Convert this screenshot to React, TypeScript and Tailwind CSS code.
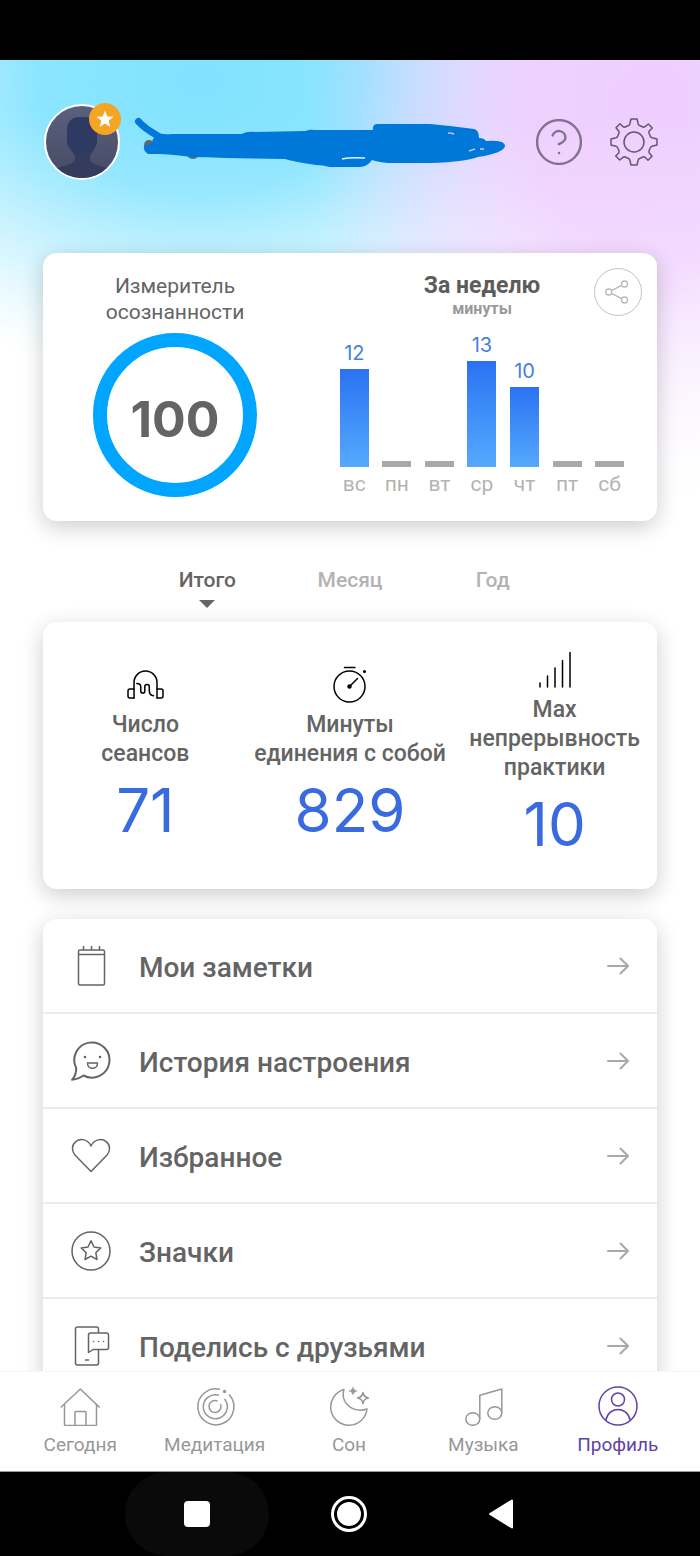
import type { ReactNode } from "react";
import { HelpCircle } from "lucide-react";

const week = [
  { day: "вс", minutes: 12 },
  { day: "пн", minutes: 0 },
  { day: "вт", minutes: 0 },
  { day: "ср", minutes: 13 },
  { day: "чт", minutes: 10 },
  { day: "пт", minutes: 0 },
  { day: "сб", minutes: 0 },
];

const periods = ["Итого", "Месяц", "Год"];

const stats = [
  {
    lines: ["Число", "сеансов"],
    value: 71,
    icon: (
      <>
        <path d="M7 31V15.500a11.500 11.500 0 0 1 23 0V31" />
        <path d="M7 31H3a2 2 0 0 1-2-2v-5a2 2 0 0 1 2-2h4M30 31h4a2 2 0 0 0 2-2v-5a2 2 0 0 0-2-2h-4" />
        <path d="M9.800 16.500c3 0 4 1.500 4 3.500v4c0 2.800 4 2.800 4 0v-4.500c0-2.800 4.500-2.800 4.500 0v4c0 3.500 1.200 5 4.200 5.200" />
      </>
    ),
  },
  {
    lines: ["Минуты", "единения с собой"],
    value: 829,
    icon: (
      <>
        <circle cx="17.500" cy="19.500" r="15.500" />
        <path d="M12.500 .5h10.500M17.500 19.500l8-8" />
        <circle cx="17.500" cy="19.500" r="1.500" fill="currentColor" />
        <circle cx="32.500" cy="4.500" r=".8" fill="currentColor" />
      </>
    ),
  },
  {
    lines: ["Max", "непрерывность", "практики"],
    value: 10,
    icon: <path d="M3 35v-4M10.500 35V24M18 35V16M25.500 35V8.500M33 35V.5" />,
  },
];

const menuItems = [
  {
    label: "Мои заметки",
    icon: (
      <>
        <rect x="7.500" y="4" width="26" height="35" rx="1.500" />
        <path d="M7.500 8.500h26M12.500 0v4M20.500 0v4M28.500 0v4" />
      </>
    ),
  },
  {
    label: "История настроения",
    icon: (
      <>
        <path
          strokeWidth="2"
          d="M5.200 27A17.600 17.600 0 1 1 12.500 34.500C8.500 37 4.500 38.700 1 38.800C3.500 36 5.500 33 5.200 27Z"
        />
        <path d="M16.500 22h10c0 7-10 7-10 0Z" />
        <circle cx="14" cy="16" r="1.300" fill="currentColor" stroke="none" />
        <circle cx="29" cy="16" r="1.300" fill="currentColor" stroke="none" />
      </>
    ),
  },
  {
    label: "Избранное",
    icon: (
      <path d="M20 35.500 4.200 19.300C.4 15 .6 9 4.500 5.800C9.500 1.800 17 3.300 20 10C23 3.300 30.500 1.800 35.500 5.800C39.400 9 39.600 15 35.800 19.300Z" />
    ),
  },
  {
    label: "Значки",
    icon: (
      <>
        <circle cx="20" cy="20" r="19" />
        <path d="m20 9.800 3 6.200 6.800.9-5 4.800 1.200 6.800-6-3.300-6 3.300 1.200-6.800-5-4.800 6.800-.9Z" />
      </>
    ),
  },
  {
    label: "Поделись с друзьями",
    icon: (
      <>
        <path d="M27.500 7V3a2 2 0 0 0-2-2h-19a2 2 0 0 0-2 2v34a2 2 0 0 0 2 2h19a2 2 0 0 0 2-2V23.500M14 34h4" />
        <path d="M19.500 7h16a2 2 0 0 1 2 2v12.500a2 2 0 0 1-2 2H22l-4.500 3V9a2 2 0 0 1 2-2Z" />
        <path strokeLinecap="round" d="M22.500 15.500h.1M27.500 15.500h.1M32.500 15.500h.1" />
      </>
    ),
  },
];

const tabs = [
  {
    label: "Сегодня",
    icon: (
      <>
        <path d="M.7 21.500 20.300 3l19.300 18.500" />
        <path d="M4.500 18.500v20a1 1 0 0 0 1 1h30a1 1 0 0 0 1-1v-20" />
        <path d="M15 39.500v-13a1 1 0 0 1 1-1h9a1 1 0 0 1 1 1v13" />
      </>
    ),
  },
  {
    label: "Медитация",
    icon: (
      <>
        <path d="M25 3.300A18 18 0 1 0 34 8.500" />
        <path d="M24 9.300A12 12 0 1 0 29.500 13" />
        <path d="M22.500 15A6 6 0 1 0 25.500 18" />
        <circle cx="29.500" cy="5.500" r="1" fill="currentColor" />
      </>
    ),
  },
  {
    label: "Сон",
    icon: (
      <>
        <path d="M15 3.500A18.200 18.200 0 1 0 38 23C24 27.500 11 17 15 3.500Z" />
        <path
          fill="currentColor"
          strokeWidth=".5"
          d="M24 1q.6 3.400 4 4-3.400.6-4 4-.6-3.400-4-4 3.400-.6 4-4Z"
        />
        <path d="M34 6.500q.8 4.700 5.500 5.500-4.700.8-5.500 5.500-.8-4.700-5.500-5.500 4.700-.8 5.500-5.500Z" />
      </>
    ),
  },
  {
    label: "Музыка",
    icon: (
      <>
        <ellipse cx="9.800" cy="33" rx="7" ry="6.300" />
        <ellipse cx="31.800" cy="27" rx="7" ry="6.300" />
        <path d="M16.800 33V9.200L38.800 3v24" />
      </>
    ),
  },
  {
    label: "Профиль",
    icon: (
      <>
        <circle cx="20" cy="20" r="19" />
        <circle cx="20" cy="13.500" r="6.500" />
        <path d="M7.800 34.500C9 27.500 14 23.500 20 23.500S31 27.500 32.200 34.500" />
      </>
    ),
  },
];

function Icon({ children, className }: { children: ReactNode; className: string }) {
  return (
    <svg
      aria-hidden="true"
      viewBox="0 0 40 40"
      className={className}
      fill="none"
      stroke="currentColor"
      strokeWidth="1.5"
      strokeLinejoin="round"
    >
      {children}
    </svg>
  );
}

function Avatar() {
  return (
    <div className="relative size-[76px] shrink-0">
      <svg
        viewBox="0 0 72 72"
        className="size-full rounded-full border-2 border-white bg-linear-to-b from-[#5b607e] to-[#464a63]"
      >
        <path
          fill="#333c5c"
          d="M6 66C14 58 27 61 29 53C30 47 22 44 21 36V25C21 15 26 11 36 11S51 15 51 25V36C50 44 43 47 44 53C46 61 58 58 66 66V72H6Z"
        />
        <path fill="#2f3a63" d="M21 25C21 15 26 11 36 11S51 15 51 25V36C49 42 46 47 36 47S23 42 21 36Z" />
      </svg>
      <span className="absolute -top-px -right-px grid size-8 place-items-center rounded-full bg-[#f5a426]">
        <svg viewBox="0 0 18 18" className="size-[18px]" fill="#fff">
          <path d="m9 .5 2.300 5.900 6.300.4-4.900 4 1.600 6.200L9 13.500 3.700 17l1.600-6.200-4.900-4 6.300-.4Z" />
        </svg>
      </span>
    </div>
  );
}

function Scribble() {
  return (
    <svg aria-hidden="true" viewBox="132 112 376 60" className="ml-3 h-[60px] w-[376px]">
      <circle cx="149" cy="145" r="5" fill="#5c6a70" />
      <ellipse cx="193" cy="156" rx="5" ry="3" fill="#5c6a70" />
      <path
        d="M138.500 121.500Q144 128 158 136"
        stroke="#0078d9"
        strokeWidth="7"
        strokeLinecap="round"
        fill="none"
      />
      <path
        fill="#0078d9"
        d="M156 132Q162 135 172 134L242 134Q247 131 255 132L306 131Q309 129 315 130L373 130Q372 124 378 124L430 124Q440 125 450 126L474 129Q479 130 479 138Q484 138 486 141Q505 140 505 146Q504 153 478 157Q460 163 420 163L388 163Q378 162 372 160Q367 167 360 167L330 167Q322 165 316 165Q295 162 285 159L225 158Q208 157 190 157Q178 155 160 154L148 154Q143 151 144 146Q148 146 152 143Q152 139 156 136Z"
      />
      <path
        d="M342 159Q350 157 365 158"
        stroke="#e3f4ff"
        strokeWidth="1.5"
        fill="none"
      />
      <path d="M448 133q4 0 6 1M469 151l6-2M480 149h4" stroke="#b9c6e8" strokeWidth="1.5" />
    </svg>
  );
}

function Header() {
  return (
    <header className="flex items-center pt-11 pr-[42px] pb-[73px] pl-11">
      <Avatar />
      <Scribble />
      <div className="ml-auto flex shrink-0 items-center gap-7">
        <button aria-label="Помощь" className="text-[#81728d]">
          <HelpCircle viewBox="1.5 1.5 21 21" className="size-[46px]" strokeWidth={1.1} />
        </button>
        <button aria-label="Настройки" className="text-[#62596b]">
          <svg
            viewBox="-24 -24 48 48"
            className="size-12"
            fill="none"
            stroke="currentColor"
            strokeWidth="1.5"
            strokeLinejoin="round"
          >
            <circle r="10" />
            <path d="M-3-23H3L4.200-18Q4.700-16.600 6-16.200L9-15Q10-14.600 11-15.300L14.300-18 18.300-14 15.300-11Q14.600-10 15-9L16.200-6Q16.600-4.700 18-4.200L23-3V3L18 4.200Q16.600 4.700 16.200 6L15 9Q14.600 10 15.300 11L18 14.300 14 18.300 11 15.300Q10 14.600 9 15L6 16.200Q4.700 16.600 4.200 18L3 23H-3L-4.200 18Q-4.700 16.600-6 16.200L-9 15Q-10 14.600-11 15.300L-14.300 18-18.300 14-15.300 11Q-14.600 10-15 9L-16.200 6Q-16.600 4.700-18 4.200L-23 3V-3L-18-4.200Q-16.600-4.700-16.200-6L-15-9Q-14.600-10-15.300-11L-18-14.300-14-18.300-11-15.300Q-10-14.600-9-15L-6-16.200Q-4.700-16.600-4.200-18Z" />
          </svg>
        </button>
      </div>
    </header>
  );
}

function WeekCard() {
  return (
    <section className="relative mx-[43px] flex rounded-[14px] bg-white pt-5 pb-6 shadow-[0_6px_22px_rgba(0,0,0,0.2)]">
      <div className="flex w-[43%] flex-col items-center">
        <h2 className="text-center text-[21px] leading-[26px] text-[#646464]">
          Измеритель
          <br />
          осознанности
        </h2>
        <div className="mt-2 grid size-[164px] place-items-center rounded-full border-14 border-[#00a5ff] pt-2 font-[Inter,sans-serif] text-[50px] leading-none font-bold text-[#646464]">
          100
        </div>
      </div>
      <div className="flex flex-1 flex-col px-[26px] text-center">
        <h2 className="text-[23px] leading-[26px] font-bold text-[#5c5c5c]">За неделю</h2>
        <p className="text-base leading-5 font-bold text-[#999]">минуты</p>
        <div className="flex flex-1 items-end">
          {week.map(({ day, minutes }) => (
            <div key={day} className="flex flex-1 flex-col items-center">
              {minutes > 0 ? (
                <>
                  <span className="mb-1 font-[Inter,sans-serif] text-xl leading-6 text-[#4482d8]">
                    {minutes}
                  </span>
                  <div
                    className="w-[29px] bg-linear-to-b from-[#2b72f3] to-[#57a9fd]"
                    style={{ height: Math.round((minutes * 98) / 12) - (minutes > 10 ? 0 : 2) }}
                  />
                </>
              ) : (
                <div className="h-[6px] w-[29px] bg-[#a8a8a8]" />
              )}
              <span className="mt-1 text-[21px] leading-[26px] text-[#b3b3b3]">{day}</span>
            </div>
          ))}
        </div>
      </div>
      <button
        aria-label="Поделиться"
        className="absolute top-[15px] right-[15px] grid size-12 place-items-center rounded-full border border-[#c4c4c4] text-[#b8b8b8]"
      >
        <svg viewBox="-14 -14 28 28" className="size-7" fill="none" stroke="currentColor" strokeWidth="1.3">
          <circle cx="-9.300" r="3" />
          <circle cx="6.500" cy="-8" r="3" />
          <circle cx="6.500" cy="8" r="3" />
          <path d="M-6.600-1.300 3.800-6.700M-6.600 1.300 3.800 6.700" />
        </svg>
      </button>
    </section>
  );
}

function StatsCard() {
  return (
    <>
      <div className="mx-auto grid w-[428px] max-w-full grid-cols-3 pt-[45px] pb-[14px]">
        {periods.map((period, i) => (
          <button
            key={period}
            className={`flex flex-col items-center text-[21px] leading-7 font-medium ${i === 0 ? "text-[#646464]" : "text-[#b3b3b3]"}`}
          >
            {period}
            {i === 0 && (
              <svg viewBox="0 0 16 8" className="mt-[6px] h-2 w-4" fill="currentColor">
                <path d="M0 0h16L8 8Z" />
              </svg>
            )}
          </button>
        ))}
      </div>
      <section className="mx-[43px] grid grid-cols-3 items-center rounded-[14px] bg-white pt-[30px] pb-[31px] shadow-[0_6px_22px_rgba(0,0,0,0.2)]">
        {stats.map(({ lines, value, icon }) => (
          <div key={value} className="flex flex-col items-center text-center">
            <svg
              aria-hidden="true"
              viewBox="0 0 36 36"
              className="size-9 overflow-visible text-black"
              fill="none"
              stroke="currentColor"
              strokeWidth="1.5"
              strokeLinecap="round"
              strokeLinejoin="round"
            >
              {icon}
            </svg>
            <h3 className="mt-[7px] text-[23px] leading-[29px] font-medium text-[#646464]">
              {lines.map((line) => (
                <span key={line} className="block whitespace-nowrap">
                  {line}
                </span>
              ))}
            </h3>
            <span className="mt-2 font-[Inter,sans-serif] text-[60px] leading-[68px] text-[#3a6ae0]">
              {value}
            </span>
          </div>
        ))}
      </section>
    </>
  );
}

function Menu() {
  return (
    <nav
      aria-label="Профиль"
      className="mx-[43px] mt-[30px] rounded-[14px] bg-white shadow-[0_6px_22px_rgba(0,0,0,0.2)]"
    >
      {menuItems.map(({ label, icon }) => (
        <a
          key={label}
          href="#"
          className="flex h-[95px] items-center border-b-2 border-[#ececec] px-7 text-[#646464]"
        >
          <Icon className="size-10 shrink-0 overflow-visible">{icon}</Icon>
          <span className="ml-7 flex-1 pt-1 text-[28px] leading-8 font-medium">{label}</span>
          <svg
            aria-hidden="true"
            viewBox="0 0 22 20"
            className="h-5 w-[22px]"
            fill="none"
            stroke="#a9a9a9"
            strokeWidth="2"
            strokeLinecap="round"
          >
            <path d="M1 10h20M13.500 2.500 21 10l-7.500 7.500" />
          </svg>
        </a>
      ))}
    </nav>
  );
}

function TabBar() {
  return (
    <nav
      aria-label="Разделы"
      className="grid h-[101px] shrink-0 grid-cols-5 border-t border-b border-t-[#f6f6f6] border-b-[#999] bg-white pt-[14px] pr-[15px] pl-[13px]"
    >
      {tabs.map(({ label, icon }) => (
        <a
          key={label}
          href="#"
          className={`flex flex-col items-center ${label === "Профиль" ? "text-[#6243a3]" : "text-[#979797]"}`}
        >
          <Icon className="size-10">{icon}</Icon>
          <span className="mt-[7px] text-[19px] leading-6">{label}</span>
        </a>
      ))}
    </nav>
  );
}

function SystemBar() {
  return (
    <div className="flex h-[84px] shrink-0 justify-center gap-2 bg-black pr-[2px]">
      <button
        aria-label="Недавние"
        className="grid w-36 place-items-center rounded-full bg-[#0a0a0a]"
      >
        <span className="size-[26px] rounded-[4px] bg-white" />
      </button>
      <button aria-label="Домой" className="grid w-36 place-items-center">
        <span className="grid size-9 place-items-center rounded-full border-3 border-white">
          <span className="size-6 rounded-full bg-white" />
        </span>
      </button>
      <button aria-label="Назад" className="grid w-36 place-items-center">
        <svg
          viewBox="0 0 26 30"
          className="h-[30px] w-[26px]"
          fill="#fff"
          stroke="#fff"
          strokeWidth="2"
          strokeLinejoin="round"
        >
          <path d="M2 15 24 1.500v27Z" />
        </svg>
      </button>
    </div>
  );
}

export default function App() {
  return (
    <div className="flex h-screen flex-col bg-white font-[Roboto,sans-serif]">
      <div className="h-[60px] shrink-0 bg-black" />
      <main className="min-h-0 flex-1 overflow-y-auto bg-[linear-gradient(to_bottom,rgba(255,255,255,0)_60px,rgba(255,255,255,0.2)_200px,#fff_440px),radial-gradient(340px_440px_at_650px_50px,#efceff_0%,rgba(239,206,255,0.95)_35%,rgba(239,206,255,0.5)_68%,rgba(239,206,255,0)_100%),radial-gradient(430px_300px_at_200px_20px,#80e2ff_0%,rgba(130,227,255,0.92)_38%,rgba(130,227,255,0.4)_72%,rgba(130,227,255,0)_100%)] [scrollbar-width:none]">
        <Header />
        <WeekCard />
        <StatsCard />
        <Menu />
      </main>
      <TabBar />
      <SystemBar />
    </div>
  );
}
